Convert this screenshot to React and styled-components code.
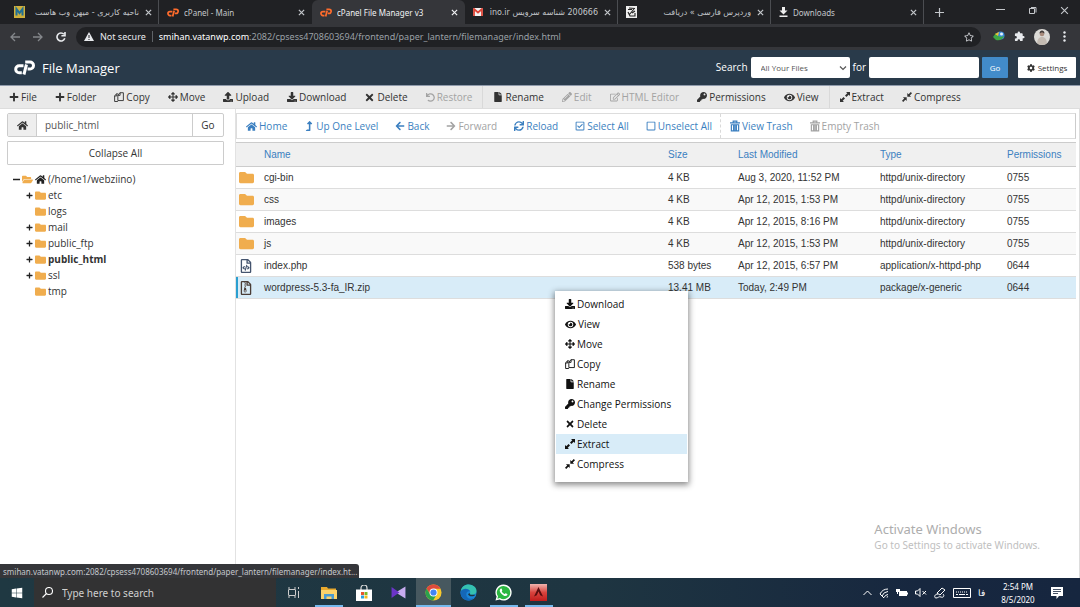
import React from 'react';
import styled, { createGlobalStyle, css } from 'styled-components';
import { FaPlus, FaArrowsAlt, FaUpload, FaDownload, FaTimes, FaUndo, FaFile, FaPencilAlt, FaRegEdit, FaKey, FaEye, FaHome, FaLevelUpAlt, FaArrowLeft, FaArrowRight, FaSync, FaRegCheckSquare, FaRegSquare, FaCog, FaFolder, FaFolderOpen, FaRegFileCode, FaRegFileArchive, FaWindows, FaRegStar } from 'react-icons/fa';

const Global = createGlobalStyle`
  *, *::before, *::after { box-sizing: border-box; }
  body { margin: 0; background: #fff; font-family: "Open Sans", sans-serif; font-size: 10px; color: #333; }
  button, input, select { font: inherit; color: inherit; margin: 0; padding: 0; border: 0; background: none; border-radius: 0; }
  a { text-decoration: none; color: inherit; }
  svg { display: block; flex: none; }
`;

const Screen = styled.div`
  min-height: 100vh;
  display: flex;
  flex-direction: column;
`;

/* ---------- browser chrome ---------- */
const TabStrip = styled.div`
  height: 24px;
  display: flex;
  align-items: stretch;
  padding-left: 6px;
  background: #202124;
  color: #c4c7cb;
  font-family: "Noto Sans", "DejaVu Sans", sans-serif;
  font-size: 8px;
`;
const Tab = styled.div`
  flex: 0 1 153px;
  min-width: 0;
  display: flex;
  align-items: center;
  gap: 5px;
  padding: 0 6px 0 8px;
  border-right: 1px solid ${p => (p.$plain ? 'transparent' : '#4b4d51')};
  ${p => p.$active && css`
    background: #35363a;
    color: #f1f3f4;
    border-color: transparent;
    border-radius: 6px 6px 0 0;
  `}
`;
const TabTitle = styled.span`
  flex: 1;
  min-width: 0;
  white-space: nowrap;
  overflow: hidden;
  text-align: left;
  direction: ${p => (p.$rtl ? 'rtl' : 'ltr')};
  ${p => p.$rtl && css`text-align: right; font-family: "DejaVu Sans", sans-serif;`}
`;
const IconButton = styled.button`
  display: flex;
  align-items: center;
  justify-content: center;
  width: ${p => p.$w || 12}px;
  color: ${p => p.$c || 'inherit'};
`;
const WindowButtons = styled.div`
  margin-left: auto;
  display: flex;
  padding-bottom: 3px;
`;
const AddressRow = styled.div`
  height: 26px;
  display: flex;
  align-items: center;
  padding: 0 11px 1px 4px;
  background: #35363a;
  color: #e8eaed;
`;
const AddressBox = styled.div`
  flex: 1;
  min-width: 0;
  height: 20px;
  display: flex;
  align-items: center;
  margin: 0 12px 0 4px;
  padding: 0 7px 0 8px;
  border-radius: 10px;
  background: #202124;
  font-family: "Noto Sans", sans-serif;
  font-size: 9px;
  color: #9aa0a6;
  white-space: nowrap;
`;
const Security = styled.span`
  display: flex;
  align-items: center;
  gap: 6px;
  color: #e8eaed;
  padding-right: 6px;
  margin-right: 6px;
  border-right: 1px solid #5f6368;
  line-height: 11px;
`;
const Url = styled.span`
  flex: 1;
  overflow: hidden;
  b { font-weight: 400; color: #fff; }
`;
const Extensions = styled.div`
  display: flex;
  align-items: center;
  gap: 9px;
`;

/* ---------- file manager ---------- */
const Header = styled.header`
  height: 35px;
  display: flex;
  align-items: center;
  padding: 0 4px 0 14px;
  background: #293a4a;
  color: #fff;
`;
const Title = styled.h1`
  flex: 1;
  margin: 0 0 0 7px;
  font-size: 13px;
  font-weight: 400;
`;
const SearchForm = styled.form`
  display: flex;
  align-items: center;
  gap: 3px;
`;
const SearchLabel = styled.label`
  font-size: 10px;
  padding-bottom: 2px;
`;
const SelectWrap = styled.span`
  position: relative;
  display: block;
  color: #555;
  svg { position: absolute; right: 3px; top: 7px; pointer-events: none; }
`;
const Select = styled.select`
  appearance: none;
  display: block;
  width: 99px;
  height: 21px;
  padding-left: 10px;
  background: #fff;
  border-radius: 2px;
  font-size: 8px;
`;
const SearchInput = styled.input`
  width: 110px;
  height: 21px;
  background: #fff;
  border-radius: 2px;
  color: #333;
  padding: 0 4px;
`;
const GoButton = styled.button`
  width: 26px;
  height: 21px;
  background: #428bca;
  color: #fff;
  border-radius: 1px;
  font-size: 8px;
`;
const SettingsButton = styled.button`
  display: flex;
  align-items: center;
  justify-content: center;
  gap: 3px;
  width: 58px;
  height: 21px;
  margin-left: 7px;
  background: #fff;
  border-radius: 1px;
  color: #333;
  font-size: 8px;
`;

const Bar = styled.nav`
  display: flex;
  align-items: stretch;
  white-space: nowrap;
  ${p => p.$main
    ? css`height: 24px; background: #e9e9e9; border-top: 1px solid #8f9aab; border-bottom: 1px solid #ddd;`
    : css`height: 26px; border: 1px solid #ddd; border-right-color: #ccc; color: #3b7fc0;`}
`;
const BarButton = styled.button`
  display: flex;
  align-items: center;
  gap: 2px;
  padding: 0 ${p => (p.$tight ? 8 : 9)}px 0 9px;
  color: ${p => (p.disabled ? '#a3a3a3' : 'inherit')};
`;
const Divider = styled.span`
  margin: 0 ${p => (p.$dashed ? 0 : 1)}px;
  border-left: 1px ${p => (p.$dashed ? 'dashed' : 'solid')} #d9d9d9;
`;

const Body = styled.div`
  flex: 1;
  display: flex;
  align-items: stretch;
  position: relative;
`;
const Side = styled.aside`
  flex: 0 0 236px;
  padding: 4px 11px 0 7px;
  border-right: 1px solid #e2e2e2;
`;
const PathForm = styled.form`
  display: flex;
  height: 24px;
  border: 1px solid #ccc;
  border-radius: 2px;
`;
const PathHome = styled.span`
  width: 29px;
  display: flex;
  align-items: center;
  justify-content: center;
  background: #eee;
  border-right: 1px solid #ccc;
`;
const PathInput = styled.input`
  flex: 1;
  min-width: 0;
  padding: 0 8px;
  color: #555;
`;
const PathGo = styled.button`
  width: 31px;
  border-left: 1px solid #ccc;
`;
const Collapse = styled.button`
  width: 100%;
  height: 24px;
  margin-top: 4px;
  border: 1px solid #ccc;
  border-radius: 1px;
`;
const Tree = styled.ul`
  list-style: none;
  margin: 0;
  padding: ${p => (p.$root ? '6px 0 0 6px' : '0 0 0 13px')};
`;
const Node = styled.div`
  display: flex;
  align-items: center;
  height: 16px;
  gap: 2px;
  font-weight: ${p => (p.$bold ? 700 : 400)};
`;
const Toggle = styled.span`
  width: 7px;
  display: flex;
  justify-content: center;
  svg { width: 7px; height: 7px; }
`;

const Main = styled.main`
  flex: 1;
  min-width: 0;
  padding: 4px 3px 0 0;
  border-right: 1px solid #ddd;
`;
const FileTable = styled.table`
  width: 100%;
  margin-top: 3px;
  border-collapse: collapse;
  table-layout: fixed;
  border-top: 1px solid #ccc;
  font-family: "Liberation Sans", Arial, sans-serif;
  font-size: 10px;
  color: #333;
  td, th {
    height: 22px;
    padding: 0;
    text-align: left;
    font-weight: 400;
    border-bottom: 1px solid #ddd;
    white-space: nowrap;
  }
  th { height: 24px; background: #f0f0f0; color: #3b7fc0; border-bottom-color: #ccc; }
`;
const FileRow = styled.tr`
  background: ${p => (p.$selected ? '#d8ecf8' : p.$odd ? '#f9f9f9' : '#fff')};
  td:first-child {
    padding-left: 3px;
    box-shadow: ${p => (p.$selected ? 'inset 2px 0 #2a9fd0' : 'none')};
  }
`;

const Menu = styled.ul`
  position: absolute;
  left: 555px;
  top: 182px;
  width: 133px;
  margin: 0;
  padding: 3px 1px 8px;
  list-style: none;
  background: #fff;
  color: #111;
  box-shadow: 0 2px 6px 1px rgba(0, 0, 0, 0.45);
`;
const MenuItem = styled.button`
  width: 100%;
  height: 20px;
  display: flex;
  align-items: center;
  gap: 2px;
  padding-left: 9px;
  background: ${p => (p.$on ? '#d8ecf8' : 'none')};
`;

const Watermark = styled.div`
  position: absolute;
  right: 40px;
  bottom: 25px;
  font-family: "Noto Sans", sans-serif;
  font-size: 10px;
  line-height: 15px;
  color: #c0c0c0;
  strong { display: block; font-size: 13px; font-weight: 400; line-height: 18px; color: #adadad; }
`;
const StatusBubble = styled.div`
  position: absolute;
  left: 0;
  bottom: 0;
  width: 359px;
  height: 14px;
  padding-left: 3px;
  background: #35363a;
  border-radius: 0 3px 0 0;
  color: #c4c7cb;
  font-family: "Noto Sans", sans-serif;
  font-size: 8px;
  line-height: 15px;
  white-space: nowrap;
`;

/* ---------- taskbar ---------- */
const Taskbar = styled.footer`
  height: 29px;
  display: flex;
  align-items: stretch;
  background: linear-gradient(90deg, #1f3842 0%, #1e3541 55%, #17273f 85%, #16263f 100%);
  color: #fff;
  font-family: "Noto Sans", sans-serif;
`;
const StartButton = styled.button`
  width: 34px;
  display: flex;
  align-items: center;
  justify-content: center;
`;
const SearchBox = styled.label`
  width: 242px;
  display: flex;
  align-items: center;
  gap: 9px;
  padding-left: 8px;
  background: #323233;
  input { flex: 1; min-width: 0; color: #ddd; outline: 0; }
  input::placeholder { color: #d0d0d0; opacity: 1; }
`;
const TaskButton = styled.button`
  width: 35px;
  display: flex;
  align-items: center;
  justify-content: center;
  background: ${p => (p.$active ? '#47585f' : 'none')};
`;
const Running = styled.span`
  align-self: stretch;
  display: flex;
  align-items: center;
  justify-content: center;
  width: ${p => (p.$wide ? 35 : 28)}px;
  padding-top: 2px;
  border-bottom: 2px solid ${p => (p.$open ? '#76b9ed' : 'transparent')};
`;
const Tray = styled.div`
  margin-left: auto;
  display: flex;
  align-items: center;
  gap: 7px;
  padding-right: 17px;
  font-size: 9px;
`;
const Clock = styled.time`
  width: 38px;
  margin: 0 7px;
  text-align: center;
  font-size: 8px;
  line-height: 13px;
`;

/* ---------- drawings ---------- */
const Stroke = ({ w = 12, h, children, sw = 1, vb, ...rest }) => (
  <svg width={w} height={h || w} viewBox={vb || `0 0 ${w} ${h || w}`} fill="none" stroke="currentColor" strokeWidth={sw} {...rest}>{children}</svg>
);
const Close = ({ s = 7, sw = 1.4 }) => <Stroke w={s} vb="0 0 8 8" sw={sw}><path d="M1 1l6 6M7 1L1 7" /></Stroke>;
const CopyIcon = () => (
  <Stroke w={10} h={11} vb="0 0 13 14" sw={1.2}>
    <path d="M5 12.200H0.800V4.700L3.400 2.200H5M3.600 2.200V5H0.800M5 4L7.700 0.800H12.200V11H5zM7.900 0.800V4.200H5" />
  </Stroke>
);
const Trash = () => (
  <Stroke w={10} h={12} vb="0 0 11 12" sw={1.3}>
    <path d="M0 2.600h11M3.500 2V0.600h4V2M1.500 4.600h8V11.300h-8zM4 5v6M5.500 5v6M7 5v6" />
  </Stroke>
);
/* two solid-headed arrows that point to the corners */
const Expand = () => (
  <svg width="10" height="10" viewBox="0 0 10 10" fill="currentColor"><path d="M10 0v4L8.700 2.700 6.400 5 5 3.600 7.300 1.300 6 0zM0 10V6l1.300 1.300L3.600 5 5 6.400 2.700 8.700 4 10z" /></svg>
);
/* the same arrows, pointing to the middle */
const Compress = () => (
  <svg width="10" height="10" viewBox="0 0 10 10" fill="currentColor"><path d="M5.300 4.700V.9l1.300 1.300L8.800 0 10 1.200 7.800 3.400l1.300 1.300zM4.700 5.300v3.800L3.400 7.800 1.200 10 0 8.800l2.200-2.200L.9 5.300z" /></svg>
);
const Chevron = () => <Stroke w={8} vb="0 0 8 8" sw={1.2}><path d="M1 2.500l3 3 3-3" /></Stroke>;
const CpLogo = ({ w = 21, color = '#fff' }) => (
  <svg width={w} height={Math.round(w * 5 / 7)} viewBox="0 0 21 15" fill="none" stroke={color} strokeWidth="3" strokeLinejoin="round">
    <path d="M9.500 5.800H5.200a3.500 3.500 0 0 0 0 7H7.800" />
    <path d="M9.900 14.500L12.500 4.500" />
    <path d="M11.200 2H16a3.500 3.500 0 0 1 0 7H13.600" />
  </svg>
);
const CpFav = () => <CpLogo w={12} color="#ff6c2c" />;

const MihanFav = () => (
  <svg width="11" height="12" viewBox="0 0 11 12"><rect width="11" height="12" fill="#d2b13a" /><rect x="1" y="1" width="9" height="10" fill="#c9ae3e" /><path d="M2.500 9.500V3l3 4L8.500 3v6.500" fill="none" stroke="#1f6f96" strokeWidth="2" /></svg>
);
const GmailFav = () => (
  <svg width="10" height="8" viewBox="0 0 10 8"><rect width="10" height="8" rx="1" fill="#f3f3f3" /><path d="M1 8V1l4 3.500L9 1v7" fill="none" stroke="#dc4437" strokeWidth="1.800" /></svg>
);
const WpFav = () => (
  <svg width="11" height="12" viewBox="0 0 11 12"><rect width="11" height="12" fill="#eee" /><path d="M2 3.500h4M3 2l6 .5M8 3L3 9M2 6l2 4h5V7M6 7l3-2" fill="none" stroke="#222" strokeWidth="1.100" /></svg>
);
const DownloadFav = () => (
  <svg width="9" height="10" viewBox="0 0 9 10" fill="#eee"><path d="M3 0h3v3.500h2.500L4.500 7.500 0.500 3.500H3zM0.500 8.500h8V10h-8z" /></svg>
);

const Idm = () => (
  <svg width="12" height="11" viewBox="0 0 12 11"><circle cx="7.500" cy="4.500" r="4" fill="#3b8ad8" /><path d="M0 6l3-4 1 2c2 2 4 2 7 1-1 3-4 5-8 4z" fill="#3fa845" /><path d="M2 3l4-2-1 4z" fill="#f1c232" /><circle cx="8.500" cy="3" r="1.500" fill="#e2f1fc" /></svg>
);
const Puzzle = () => (
  <svg width="11" height="11" viewBox="0 0 24 24" fill="currentColor"><path d="M20.500 11H19V7a2 2 0 0 0-2-2h-4V3.500a2.500 2.500 0 0 0-5 0V5H4a2 2 0 0 0-2 2v3.800h1.500a2.700 2.700 0 0 1 0 5.400H2V20a2 2 0 0 0 2 2h3.800v-1.500a2.700 2.700 0 0 1 5.400 0V22H17a2 2 0 0 0 2-2v-4h1.500a2.500 2.500 0 0 0 0-5z" /></svg>
);
const Avatar = () => (
  <svg width="16" height="16" viewBox="0 0 16 16"><defs><clipPath id="round"><circle cx="8" cy="8" r="8" /></clipPath></defs><g clipPath="url(#round)"><rect width="16" height="16" fill="#dcdad6" /><path d="M3 16c0-6 2-8 5-8s5 2 5 8z" fill="#c4bbb2" /><circle cx="8" cy="5" r="2.300" fill="#a98c7c" /><path d="M5.500 4.500c0-4 5-4 5 0L8 3.200z" fill="#423b38" /></g></svg>
);

const Explorer = () => (
  <svg width="16" height="14" viewBox="0 0 16 14"><path d="M0 1h6l1 1.500h8V13H0z" fill="#e8a92e" /><path d="M0 4h16v9H0z" fill="#fbd36b" /><path d="M3 13V8h10v5h-2.500v-2.500h-5V13z" fill="#4a9bd0" /></svg>
);
const Store = () => (
  <svg width="16" height="16" viewBox="0 0 16 16"><path d="M5 5V3a3 3 0 0 1 6 0v2" fill="none" stroke="#ddd" strokeWidth="1.200" /><path d="M0 4.500h16V16H0z" fill="#fff" /><path d="M5 7h3v3H5z" fill="#e8532d" /><path d="M8.500 7h3v3h-3z" fill="#7db928" /><path d="M5 10.500h3v3H5z" fill="#2ba1e0" /><path d="M8.500 10.500h3v3h-3z" fill="#f5b81c" /></svg>
);
const VisualStudio = () => (
  <svg width="15" height="13" viewBox="0 0 16 14"><path d="M15.500 0.500v13L5 7z" fill="#c6abf0" /><path d="M0.500 1L9 7l-8.500 6z" fill="#6a35c9" /></svg>
);
const Chrome = () => (
  <svg width="17" height="17" viewBox="0 0 18 18"><circle cx="9" cy="9" r="8.500" fill="#f9c92d" /><path d="M1.600 4.800A8.500 8.500 0 0 1 16.400 5H9L5.500 11z" fill="#df4a3c" /><path d="M1.600 4.700A8.500 8.500 0 0 0 8.600 17.500L12.400 11H5.600z" fill="#2ba24c" /><circle cx="9" cy="9" r="4.200" fill="#fff" /><circle cx="9" cy="9" r="3.300" fill="#4285f4" /></svg>
);
const Edge = () => (
  <svg width="17" height="17" viewBox="0 0 18 18"><circle cx="9" cy="9" r="8.500" fill="#1b86d8" /><path d="M0.700 8C1.500 3 5 .5 9 .5c5 0 8.500 3.200 8.500 6.700 0 3-2.500 4.300-5 4.300-2 0-2.500-.8-1.800-2C11.500 7.500 10 5.800 7.500 5.800 4 5.800 1.500 7 .7 8z" fill="#35c1b0" /><path d="M.7 8c2-4 8.500-4 10 0-1.500-1-4 0-4 3 0 3.500 3.500 6 8 3.500-1.500 2-4 3-6 3C4 17.500 0 13.500.7 8z" fill="#1467b8" /><path d="M10.700 9.500c-.7 1.200-.2 2 1.800 2h4c-1 2-7.500 2.500-8-1z" fill="#1e3541" /></svg>
);
const WhatsApp = () => (
  <svg width="17" height="17" viewBox="0 0 18 18"><path d="M9 .5a8.500 8.500 0 0 0-7.300 12.800L.5 17.500l4.400-1.100A8.500 8.500 0 1 0 9 .5z" fill="#fff" /><path d="M9 2a7 7 0 0 0-5.800 11L2.500 15.500l2.700-.7A7 7 0 1 0 9 2z" fill="#2cb742" /><path d="M6 5c.8-.6 1.200 0 1.700 1.600.1.500-.7.900-.5 1.300.6 1.200 1.600 2.200 2.900 2.700.4.100.9-1 1.300-.8 1.600.7 2 .9 1.700 1.700-.5 1.300-2.200 1.500-3.600.9C7.500 11.500 5.800 9.500 5.200 8c-.5-1.300 0-2.400.8-3z" fill="#fff" /></svg>
);
const RedApp = () => (
  <svg width="17" height="17" viewBox="0 0 17 17"><defs><linearGradient id="red" x2="0" y2="1"><stop offset="0" stopColor="#f0b4ae" /><stop offset=".5" stopColor="#d8443e" /><stop offset="1" stopColor="#c01c1c" /></linearGradient></defs><rect width="17" height="17" fill="url(#red)" /><path d="M8.500 3L13 12.500l-2.800-1.300L8.500 7.500 6.800 11.200 4 12.500z" fill="#5a0e10" /></svg>
);

const MAIN = [
  ['File', <FaPlus size={10} />], ['Folder', <FaPlus size={10} />], ['Copy', <CopyIcon />], ['Move', <FaArrowsAlt size={10} />],
  ['Upload', <FaUpload size={10} />], ['Download', <FaDownload size={10} />], ['Delete', <FaTimes size={11} />],
  ['Restore', <FaUndo size={9} />, true], null,
  ['Rename', <FaFile size={10} />], ['Edit', <FaPencilAlt size={10} />, true], ['HTML Editor', <FaRegEdit size={10} />, true],
  ['Permissions', <FaKey size={10} />], ['View', <FaEye size={11} />], null,
  ['Extract', <Expand />], ['Compress', <Compress />],
];
const NAV = [
  ['Home', <FaHome size={11} />], ['Up One Level', <FaLevelUpAlt size={10} />], ['Back', <FaArrowLeft size={10} />],
  ['Forward', <FaArrowRight size={10} />, true], ['Reload', <FaSync size={10} />], ['Select All', <FaRegCheckSquare size={10} />],
  ['Unselect All', <FaRegSquare size={10} />], null, ['View Trash', <Trash />], ['Empty Trash', <Trash />, true],
];
const MENU = [
  ['Download', <FaDownload size={10} />], ['View', <FaEye size={11} />], ['Move', <FaArrowsAlt size={10} />], ['Copy', <CopyIcon />],
  ['Rename', <FaFile size={10} />], ['Change Permissions', <FaKey size={10} />], ['Delete', <FaTimes size={10} />],
  ['Extract', <Expand />], ['Compress', <Compress />],
];
const FILES = [
  ['cgi-bin', '4 KB', 'Aug 3, 2020, 11:52 PM', 'httpd/unix-directory', '0755'],
  ['css', '4 KB', 'Apr 12, 2015, 1:53 PM', 'httpd/unix-directory', '0755'],
  ['images', '4 KB', 'Apr 12, 2015, 8:16 PM', 'httpd/unix-directory', '0755'],
  ['js', '4 KB', 'Apr 12, 2015, 1:53 PM', 'httpd/unix-directory', '0755'],
  ['index.php', '538 bytes', 'Apr 12, 2015, 6:57 PM', 'application/x-httpd-php', '0644', <FaRegFileCode size={14} color="#44546e" />],
  ['wordpress-5.3-fa_IR.zip', '13.41 MB', 'Today, 2:49 PM', 'package/x-generic', '0644', <FaRegFileArchive size={14} color="#4a3d36" />],
];
const DIRS = [['etc', 1], ['logs', 0], ['mail', 1], ['public_ftp', 1], ['public_html', 1, 1], ['ssl', 1], ['tmp', 0]];
const TABS = [
  { icon: <MihanFav />, title: 'ناحیه کاربری - میهن وب هاست', rtl: true },
  { icon: <CpFav />, title: 'cPanel - Main', plain: true },
  { icon: <CpFav />, title: 'cPanel File Manager v3', active: true },
  { icon: <GmailFav />, title: '200666 شناسه سرویس ino.ir', rtl: true },
  { icon: <WpFav />, title: 'وردپرس فارسی » دریافت', rtl: true },
  { icon: <DownloadFav />, title: 'Downloads' },
];
const APPS = [
  [<Explorer />, 'File Explorer', true], [<Store />, 'Store', false], [<VisualStudio />, 'Visual Studio', false],
  [<Chrome />, 'Chrome', true, true], [<Edge />, 'Edge', false], [<WhatsApp />, 'WhatsApp', true], [<RedApp />, 'Reader', true],
];

const Actions = ({ items, tight }) => items.map((it, i) => it
  ? <BarButton key={i} type="button" $tight={tight} disabled={it[2]}>{it[1]}{it[0]}</BarButton>
  : <Divider key={i} $dashed={tight} />);

export default function App() {
  return (
    <Screen>
      <Global />
      <TabStrip>
        {TABS.map(t => (
          <Tab key={t.title} $active={t.active} $plain={t.plain}>
            {t.icon}<TabTitle $rtl={t.rtl}>{t.title}</TabTitle>
            <IconButton $w={8} aria-label="Close tab"><Close /></IconButton>
          </Tab>
        ))}
        <IconButton $w={30} aria-label="New tab"><Stroke w={9} sw={1.2}><path d="M4.500 0v9M0 4.500h9" /></Stroke></IconButton>
        <WindowButtons>
          <IconButton $w={32} aria-label="Minimize"><Stroke w={9}><path d="M0 3.500h9" /></Stroke></IconButton>
          <IconButton $w={32} aria-label="Restore"><Stroke w={9}><path d="M1.500 2.500h5v5h-5zM3 1.500h5v5" /></Stroke></IconButton>
          <IconButton $w={32} aria-label="Close"><Close s={9} sw={1} /></IconButton>
        </WindowButtons>
      </TabStrip>
      <AddressRow>
        <IconButton $w={22} $c="#84878b" aria-label="Back"><Stroke w={10} sw={1.3}><path d="M10 5H1M5 1L1 5l4 4" /></Stroke></IconButton>
        <IconButton $w={24} $c="#84878b" aria-label="Forward"><Stroke w={10} sw={1.3}><path d="M0 5h9M5 1l4 4-4 4" /></Stroke></IconButton>
        <IconButton $w={22} aria-label="Reload"><Stroke w={10} sw={1.6}><path d="M8.800 6.200A4 4 0 1 1 8 2.300M9 0v3.700H5.400" /></Stroke></IconButton>
        <AddressBox>
          <Security>
            <svg width="10" height="9" viewBox="0 0 10 9"><path d="M5 0l5 9H0z" fill="#e8eaed" /><path d="M5 3v3M5 7v1" stroke="#202124" /></svg>
            Not secure
          </Security>
          <Url><b>smihan.vatanwp.com</b>:2082/cpsess4708603694/frontend/paper_lantern/filemanager/index.html</Url>
          <FaRegStar size={10} color="#c8cace" />
        </AddressBox>
        <Extensions>
          <Idm /><Puzzle /><Avatar />
          <IconButton $w={10} aria-label="Menu"><svg width="3" height="11" fill="currentColor"><circle cx="1.500" cy="1.500" r="1.200" /><circle cx="1.500" cy="5.500" r="1.200" /><circle cx="1.500" cy="9.500" r="1.200" /></svg></IconButton>
        </Extensions>
      </AddressRow>
      <Header>
        <CpLogo />
        <Title>File Manager</Title>
        <SearchForm onSubmit={e => e.preventDefault()}>
          <SearchLabel htmlFor="scope">Search</SearchLabel>
          <SelectWrap><Select id="scope"><option>All Your Files</option></Select><Chevron /></SelectWrap>
          <SearchLabel htmlFor="query">for</SearchLabel>
          <SearchInput id="query" />
          <GoButton>Go</GoButton>
          <SettingsButton type="button"><FaCog size={8} />Settings</SettingsButton>
        </SearchForm>
      </Header>
      <Bar $main><Actions items={MAIN} /></Bar>
      <Body>
        <Side>
          <PathForm onSubmit={e => e.preventDefault()}>
            <PathHome><FaHome size={11} /></PathHome>
            <PathInput aria-label="Path" defaultValue="public_html" />
            <PathGo>Go</PathGo>
          </PathForm>
          <Collapse type="button">Collapse All</Collapse>
          <Tree $root>
            <li>
              <Node><Toggle><svg width="7" height="7"><path d="M0 3.500h7" stroke="#222" strokeWidth="1.500" /></svg></Toggle><FaFolderOpen size={11} color="#f0ad4e" /><FaHome size={11} color="#222" />(/home1/webziino)</Node>
              <Tree>
                {DIRS.map(([n, plus, bold]) => (
                  <li key={n}><Node $bold={bold}><Toggle>{plus ? <FaPlus color="#222" /> : null}</Toggle><FaFolder size={11} color="#f0ad4e" />{n}</Node></li>
                ))}
              </Tree>
            </li>
          </Tree>
        </Side>
        <Main>
          <Bar><Actions items={NAV} tight /></Bar>
          <FileTable>
            <colgroup><col style={{ width: 28 }} /><col /><col style={{ width: 70 }} /><col style={{ width: 142 }} /><col style={{ width: 127 }} /><col style={{ width: 69 }} /></colgroup>
            <thead><tr><th aria-label="Kind" />{['Name', 'Size', 'Last Modified', 'Type', 'Permissions'].map(h => <th key={h} scope="col">{h}</th>)}</tr></thead>
            <tbody>
              {FILES.map((f, i) => (
                <FileRow key={f[0]} $odd={i % 2 === 1} $selected={i === 5}>
                  <td>{f[5] || <FaFolder size={15} color="#f0ad4e" />}</td>
                  {f.slice(0, 5).map((c, j) => <td key={j}>{c}</td>)}
                </FileRow>
              ))}
            </tbody>
          </FileTable>
        </Main>
        <Menu>
          {MENU.map(([t, icon]) => <li key={t}><MenuItem type="button" $on={t === 'Extract'}>{icon}{t}</MenuItem></li>)}
        </Menu>
        <Watermark><strong>Activate Windows</strong>Go to Settings to activate Windows.</Watermark>
        <StatusBubble>smihan.vatanwp.com:2082/cpsess4708603694/frontend/paper_lantern/filemanager/index.ht...</StatusBubble>
      </Body>
      <Taskbar>
        <StartButton aria-label="Start"><FaWindows size={12} /></StartButton>
        <SearchBox>
          <Stroke w={11} sw={1.1}><circle cx="7" cy="4" r="3.500" /><path d="M4.500 6.500L0.500 10.500" /></Stroke>
          <input aria-label="Search" placeholder="Type here to search" />
        </SearchBox>
        <TaskButton aria-label="Task view"><Stroke w={12} h={11} stroke="#ccc"><path d="M1 0v2.500h6V0M1 11V8.500h6V11M0.500 2.500v6M7.500 2.500v6M10.500 0v2M10.500 4v7" /></Stroke></TaskButton>
        {APPS.map(([icon, name, open, active]) => (
          <TaskButton key={name} aria-label={name} $active={active}><Running $open={open} $wide={active}>{icon}</Running></TaskButton>
        ))}
        <Tray>
          <Stroke w={9} h={8}><path d="M0.500 6l4-4 4 4" /></Stroke>
          <Stroke w={10}><path d="M1 6a9 9 0 0 1 8-5M3 8a7 7 0 0 1 6-4.500M5 9.500A5 5 0 0 1 9 6.500M8 9.500a1 1 0 0 1 1-1M1 6l4 4" /></Stroke>
          <svg width="12" height="8" viewBox="0 0 12 8" fill="#fff"><path d="M3 2h8v5H3zM11 3.500h1v2h-1zM0 0h4v3H2v2H1V3H0z" /></svg>
          <Stroke w={12} h={9}><path d="M0.500 3v3h2l2.500 2.500v-8L2.500 3zM7.500 3l3.500 3.500M11 3L7.500 6.500" /></Stroke>
          <Stroke w={12}><path d="M8 1l3 2-5 5-3-2zM4 7C0 7 0 11 2 11s3-2 5-1 4-1 2-3" /></Stroke>
          <Stroke w={18} h={10}><path d="M0.500 0.500h17v9h-17z" /><path d="M3 4h12" strokeDasharray="1 1" /><path d="M3 6.500h2M6 6.500h6M13 6.500h2" /></Stroke>
          <span>فا</span>
          <Clock>2:54 PM<br />8/5/2020</Clock>
          <svg width="12" height="12" viewBox="0 0 12 12"><path d="M0 0h12v9H8l-2.500 3V9H0z" fill="#fff" /><path d="M2 2.500h8M2 4.500h8M2 6.500h5" stroke="#16263f" strokeWidth=".8" /></svg>
        </Tray>
      </Taskbar>
    </Screen>
  );
}
